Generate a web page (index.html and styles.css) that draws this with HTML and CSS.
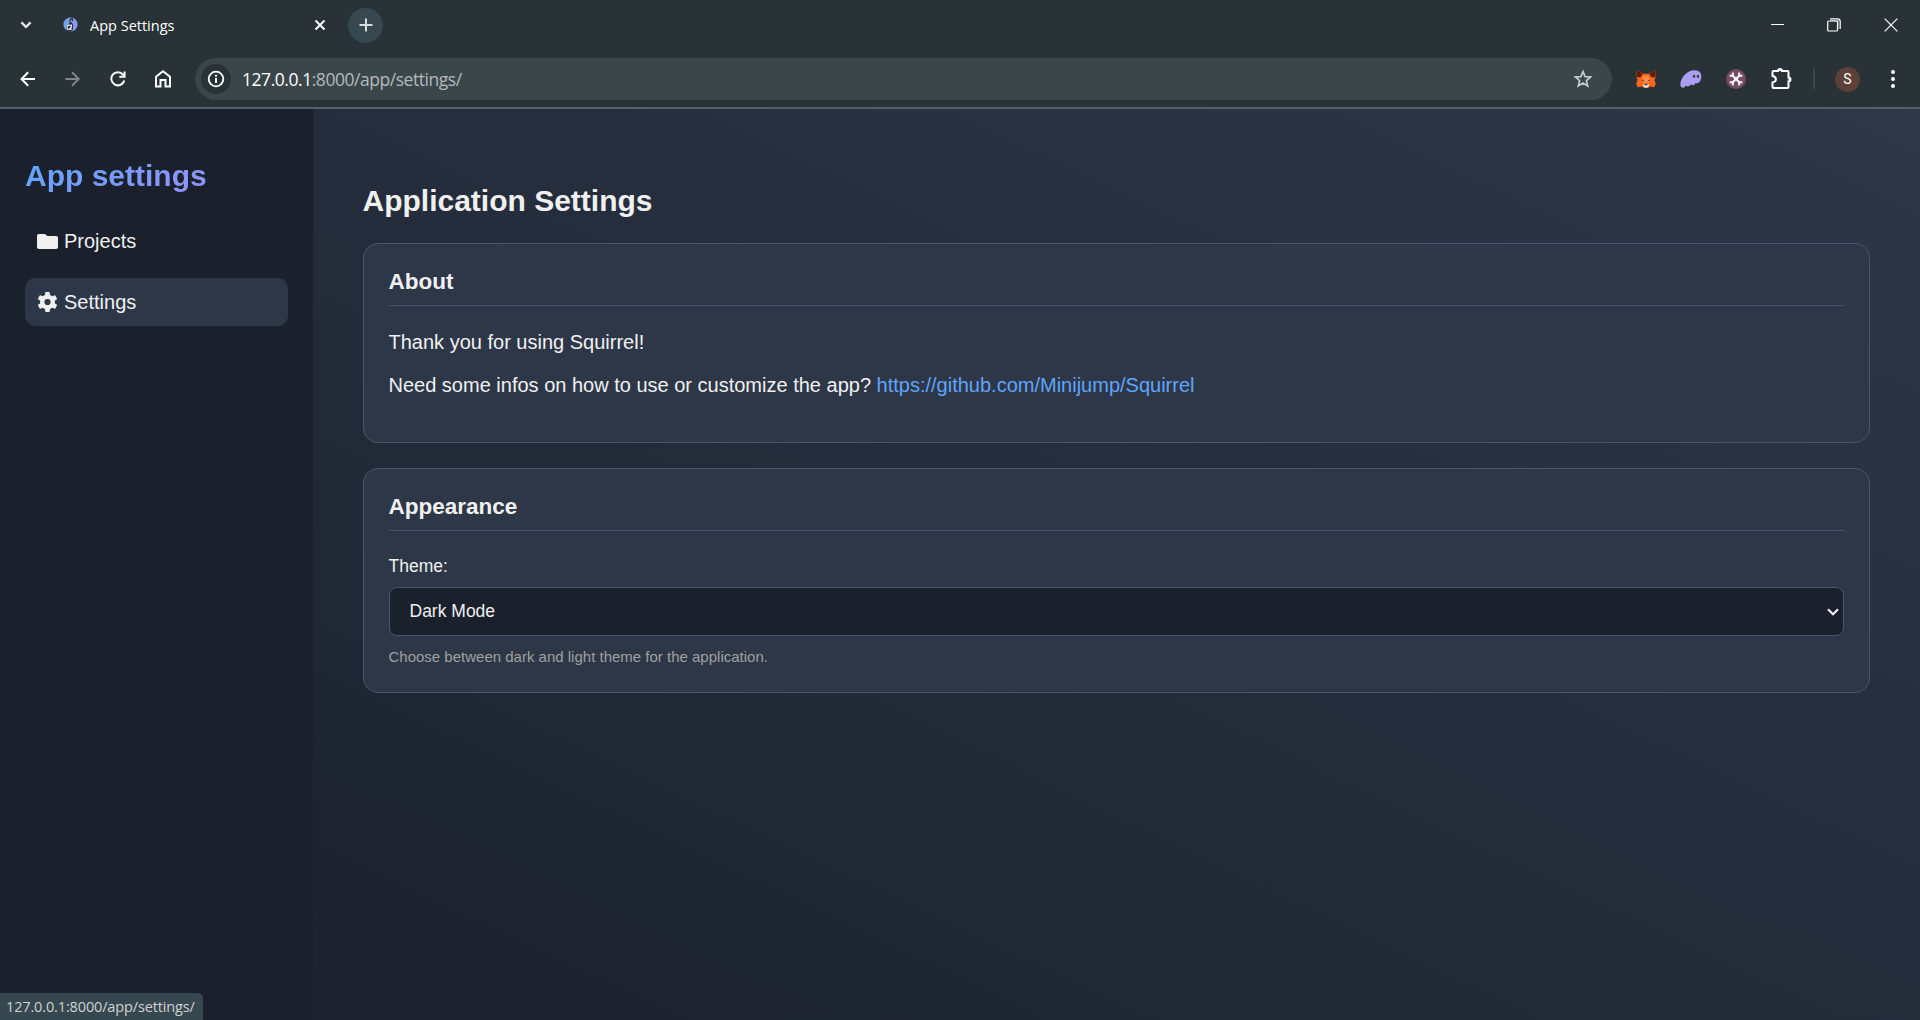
FILE: index.html
```html
<!DOCTYPE html>
<html lang="en">
<head>
<meta charset="utf-8">
<title>App Settings</title>
<link rel="stylesheet" href="styles.css">
</head>
<body>
<header class="browser">
  <div class="tabs">
    <button class="icon-btn tab-search" aria-label="Search tabs"><svg width="12" height="8" viewBox="0 0 12 8"><path d="M1.400 1.400 6 6l4.600-4.600" fill="none" stroke="#f3f5f5" stroke-width="2.200"/></svg></button>
    <div class="tab">
      <svg class="favicon" width="16" height="16" viewBox="0 0 16 16"><defs><linearGradient id="fav" x2="1" y2="0"><stop stop-color="#68a6f6"/><stop offset="1" stop-color="#8f94f3"/></linearGradient></defs><circle cx="7.500" cy="7.500" r="7.100" fill="url(#fav)"/><path d="M6.800 2 9.500.8l.8 2.700-1.700 1.500 1.600 3-.4 5-3 1.700-3-1.200L3 10l3-3z" fill="#26313d"/><path d="M8 2.800 9 4 7.500 6z" fill="#dce3eb"/><path d="M7.800 8.500C5 7.500 3.500 9.500 4.300 11.500 5 13 7.200 12.500 7.800 10.500M8.600 7.500 7.800 13" fill="none" stroke="#eef2f5" stroke-width="1.200"/></svg>
      <span class="tab-title">App Settings</span>
      <svg class="tab-close" width="12" height="12" viewBox="0 0 12 12"><path d="m1.500 1.500 9 9m0-9-9 9" stroke="#fff" stroke-width="1.900"/></svg>
    </div>
    <button class="new-tab" aria-label="New tab"><svg width="14" height="14" viewBox="0 0 14 14"><path d="M7 .5v13M.5 7h13" stroke="#dadcdc" stroke-width="2"/></svg></button>
    <div class="window-controls">
      <svg width="13" height="13" viewBox="0 0 13 13"><path d="M0 5.500h13" stroke="#fff"/></svg>
      <svg width="14" height="14" viewBox="0 0 14 14" fill="none" stroke="#fff"><path d="M3 .8h7.500a2.700 2.700 0 0 1 2.700 2.700V11" stroke-width="1.200"/><path d="M3 2.500h8V11" stroke="#899094" stroke-width="1.500"/><rect x=".7" y="3" width="9.800" height="10" rx="1" stroke-width="1.200"/></svg>
      <svg width="14" height="14" viewBox="0 0 14 14"><path d="m.7.700 12.600 12.600m0-12.600L.7 13.300" stroke="#fff" stroke-width="1.200"/></svg>
    </div>
  </div>
  <div class="toolbar">
    <div class="nav-icons">
      <svg width="16" height="16" viewBox="0 0 16 16" fill="none" stroke="#fff" stroke-width="2"><path d="M15 8H2M8.200 1.200 1.500 8l6.700 6.800"/></svg>
      <svg width="16" height="16" viewBox="0 0 16 16" fill="none" stroke="#7f878a" stroke-width="2"><path d="M.3 8h13M7 1.200 13.700 8 7 14.800"/></svg>
      <svg width="16" height="16" viewBox="0 0 16 16" fill="none" stroke="#fff" stroke-width="2"><path d="M14.300 9.500A6.600 6.600 0 1 1 13 3.500L14.500 5"/><path d="M14.600.5v5.300H9.300"/></svg>
      <svg width="16" height="18" viewBox="0 0 16 18" fill="none" stroke="#fff" stroke-width="2"><path d="M1 16.500V6.700L8 1.300l7 5.400v9.800h-4.500V10h-5v6.500z"/></svg>
    </div>
    <div class="address">
      <span class="site-info"><svg width="18" height="18" viewBox="0 0 18 18"><circle cx="9" cy="9" r="7.300" fill="none" stroke="#fff" stroke-width="1.800"/><path d="M9 8v5M9 4.800v2" stroke="#fff" stroke-width="1.900"/></svg></span>
      <span class="url"><b>127.0.0.1</b>:8000/app/settings/</span>
      <svg class="star" width="20" height="20" viewBox="0 0 20 20"><path d="m10 2.500 2.100 5.100 5.500.4-4.200 3.600 1.300 5.400-4.700-2.900L5.300 17l1.300-5.400L2.400 8l5.500-.4z" fill="none" stroke="#c7caca" stroke-width="1.700"/></svg>
    </div>
    <div class="extensions">
      <svg width="20" height="20" viewBox="0 0 20 20"><path d="M.8 1 7 4.800h6L19.200 1l.3 7-1 3 1.300 4-1.700 3.300-4-.8-2.100 1.500H8l-2.100-1.500-4 .8L.2 15l1.300-4-1-3z" fill="#f8661d"/><path d="M1 1 6.800 5 4.200 8.500.8 8zM19 1l-5.800 4 2.600 3.500 3.400-.5z" fill="#661800"/><path d="m7.500 6.500 2.500.5 2.500-.5 1.500 6-4 2.500-4-2.500z" fill="#ff8a4a"/><path d="m6 10.700 1.700.5v1.100L6 11.800zm8 0-1.700.5v1.100l1.700-.5z" fill="#39404d"/><path d="m6.800 15.800 1.700-.8h3l1.700.8-1.500 2.800H8.300z" fill="#f8eee8"/><path d="M8.500 15h3l.2 1.300H8.300z" fill="#2b343a"/></svg>
      <svg width="22" height="18" viewBox="0 0 22 18"><path d="M1.500 17.300C-.8 15 .8 9.500 4 5.500 8 .5 14.500-.8 18.500 1c4 1.800 3.300 9.300.4 11.600-1.300 1-2.500.9-3.200.2-1 2.500-3.200 3.200-4.700 1.400-1.300 2.500-4 2.700-5.200 1.200-1 1.700-2.800 3-4.300 1.900z" fill="#ab9ff2"/><ellipse cx="14" cy="6.200" rx="1.100" ry="1.500" fill="#293239"/><ellipse cx="18" cy="6.200" rx="1.100" ry="1.500" fill="#293239"/></svg>
      <svg width="20" height="20" viewBox="0 0 20 20"><circle cx="10" cy="10" r="10" fill="#754c67"/><path d="m6 6 8 8m0-8-8 8" stroke="#fff" stroke-width="2"/><path d="M6.600 3.700Q8 7.500 3.700 6.600M13.400 3.700q-1.400 3.800 2.900 2.900M6.600 16.300Q8 12.500 3.700 13.400m9.700 2.900q-1.400-3.800 2.900-2.900" fill="none" stroke="#fff" stroke-width="1.900"/></svg>
      <svg class="puzzle" width="22" height="22" viewBox="0 0 22 22"><path d="M3.500 3H8a2 2 0 0 1 4 0h5.500q1 0 1 1v5.500a2 2 0 0 1 0 4V19q0 1-1 1h-14q-1 0-1-1v-4.500c4.500-1 4.500-5.500 0-6.500V4q0-1 1-1z" fill="none" stroke="#fff" stroke-width="2"/><path d="M8.200 3a1.900 1.900 0 0 1 3.800 0zM18.500 9.700a1.900 1.900 0 0 1 0 3.800z" fill="#fff"/></svg>
    </div>
    <span class="divider"></span>
    <span class="avatar">S</span>
    <svg class="menu" width="4" height="18" viewBox="0 0 4 18" fill="#fff"><circle cx="2" cy="2" r="2"/><circle cx="2" cy="9" r="2"/><circle cx="2" cy="16" r="2"/></svg>
  </div>
</header>
<div class="app">
  <aside class="sidebar">
    <h2 class="brand">App settings</h2>
    <nav class="side-nav">
      <a class="side-link"><svg class="link-icon" width="21" height="20" viewBox="0 0 21 20"><path d="M2 3h5.500q.8 0 1.300.6L10.300 5H19q2 0 2 2v9.200q0 1.800-2 1.800H2q-2 0-2-1.800V4.800Q0 3 2 3z" fill="#f0f0f0"/></svg>Projects</a>
      <a class="side-link active"><svg class="link-icon" width="21" height="20" viewBox="0 0 21 20"><g transform="translate(10.500 10)" fill="#f0f0f0"><path fill-rule="evenodd" d="M0-7.500A7.500 7.500 0 1 1 0 7.500 7.500 7.500 0 1 1 0-7.500M0-3.100A3.100 3.100 0 1 0 0 3.100 3.100 3.100 0 1 0 0-3.100"/><g id="teeth"><rect x="-2.400" y="-10" width="4.800" height="4.500" rx="1.100"/><rect x="-2.400" y="5.500" width="4.800" height="4.500" rx="1.100"/></g><use href="#teeth" transform="rotate(60)"/><use href="#teeth" transform="rotate(120)"/></g></svg>Settings</a>
    </nav>
  </aside>
  <main class="content">
    <h1 class="page-title">Application Settings</h1>
    <section class="card about">
      <h3 class="card-title">About</h3>
      <p class="text">Thank you for using Squirrel!</p>
      <p class="text">Need some infos on how to use or customize the app? <a class="link">https://github.com/Minijump/Squirrel</a></p>
    </section>
    <section class="card appearance">
      <h3 class="card-title">Appearance</h3>
      <label class="label">Theme:</label>
      <div class="select"><span>Dark Mode</span><svg width="12" height="8" viewBox="0 0 12 8"><path d="m1 1.300 5 5 5-5" fill="none" stroke="#f0f0f0" stroke-width="2.200"/></svg></div>
      <p class="help">Choose between dark and light theme for the application.</p>
    </section>
  </main>
  <div class="status">127.0.0.1:8000/app/settings/</div>
</div>
</body>
</html>
```
FILE: styles.css
```css
* { box-sizing: border-box; }
body { margin: 0; height: 1020px; overflow: hidden; display: flex; flex-direction: column; font-family: "Liberation Sans", Arial, sans-serif; color: #f0f0f0; background: #1a202c; }
svg { display: block; flex: none; }
button { border: 0; padding: 0; background: none; display: grid; place-items: center; }
h1, h2, h3, p { margin: 0; }

.browser { height: 109px; background: #283237; border-bottom: 2px solid #566163; font-family: "Open Sans", "Noto Sans", sans-serif; flex: none; }
.tabs { height: 50px; display: flex; align-items: center; padding-left: 20px; }
.tab { width: 263px; display: flex; align-items: center; margin-left: 31px; }
.tab-title { margin-left: 11px; font-size: 14.500px; color: #fff; flex: 1; }
.new-tab { width: 35px; height: 35px; border-radius: 50%; background: #374850; margin-left: 22px; }
.window-controls { margin-left: auto; display: flex; align-items: center; gap: 43px; padding-right: 22px; }
.toolbar { height: 58px; display: flex; align-items: center; }
.nav-icons { display: flex; align-items: center; gap: 29px; padding-left: 20px; width: 195px; }
.address { width: 1417px; height: 42px; border-radius: 21px; background: #3b464a; display: flex; align-items: center; padding: 0 19px 0 6px; }
.site-info { width: 30px; height: 30px; border-radius: 50%; background: #283237; display: grid; place-items: center; }
.url { margin-left: 11px; font-size: 17.500px; letter-spacing: -.46px; color: #b3b9bb; flex: 1; }
.url b { font-weight: 400; color: #fff; }
.extensions { display: flex; align-items: center; gap: 24px; margin-left: 24px; }
.divider { width: 2px; height: 20px; background: #374850; margin-left: 21px; }
.avatar { width: 25px; height: 25px; border-radius: 50%; background: #5d4037; color: #fff; font: 14px Roboto, sans-serif; display: grid; place-items: center; margin-left: 20px; }
.menu { margin-left: 31px; }

.app { position: relative; flex: 1; display: flex; background: linear-gradient(to top right, #1a202c, #2d3748); }
.sidebar { width: 313px; padding: 49px 25px; background: #1a202c; }
.brand { font-size: 30px; line-height: 35px; background: linear-gradient(135deg, #60a5fa, #a78bfa); background-clip: text; -webkit-background-clip: text; color: transparent; }
.side-nav { display: flex; flex-direction: column; gap: 13px; margin-top: 24px; }
.side-link { height: 48px; border-radius: 10px; display: flex; align-items: center; gap: 6px; padding-left: 12px; font-size: 20px; }
.active { background: #2d3748; }
.content { flex: 1; padding: 75px 50px 0 49.500px; }
.page-title { font-size: 30px; line-height: 34px; }
.card { border: 1px solid #4a5568; border-radius: 15px; background: #2d3748; padding: 25px; }
.about { height: 200px; margin-top: 25px; }
.appearance { height: 225px; margin-top: 25px; }
.card-title { font-size: 22.500px; line-height: 26px; padding-bottom: 10px; border-bottom: 1px solid #4a5568; margin-bottom: 25px; }
.text { font-size: 20px; line-height: 23px; margin-bottom: 20px; }
.link { color: #60a5fa; }
.label { display: block; font-size: 17.500px; line-height: 20px; }
.select { height: 49px; margin-top: 11px; border: 1px solid #4a5568; border-radius: 8px; background: #1a202c; display: flex; align-items: center; justify-content: space-between; padding: 0 4px 0 20px; font-size: 17.500px; }
.help { margin-top: 12px; font-size: 15px; line-height: 18px; color: #a0a0a0; }
.status { position: absolute; left: 0; bottom: 0; width: 203px; height: 27px; padding-left: 6px; border-top-right-radius: 5px; background: #37474f; color: #ced2d4; font: 14.500px/27px "Open Sans", "Noto Sans", sans-serif; letter-spacing: -.14px; }
```
